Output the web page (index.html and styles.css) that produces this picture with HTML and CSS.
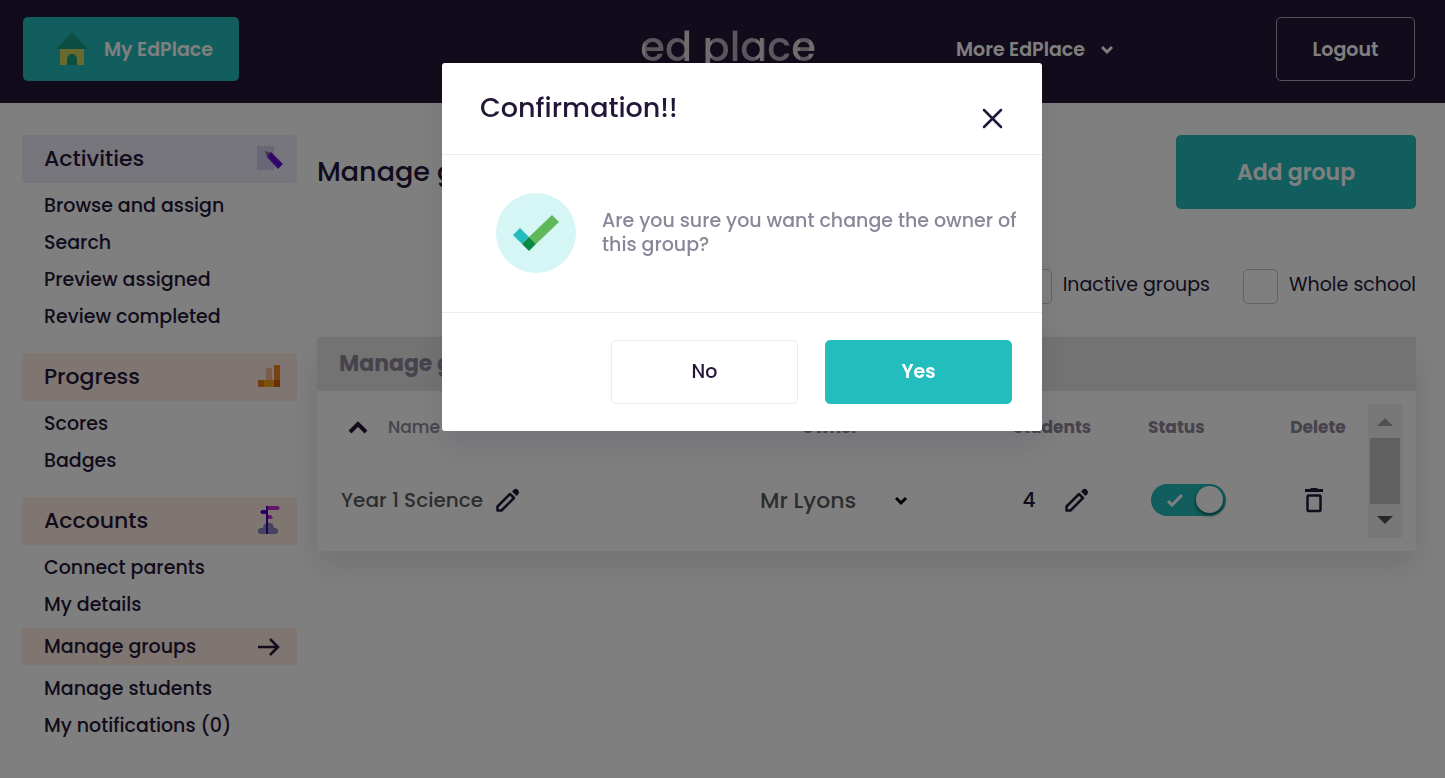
FILE: index.html
```
<!DOCTYPE html>
<html lang="en">

<head>
    <meta charset="UTF-8" />
    <meta name="viewport" content="width=device-width, initial-scale=1.0" />
    <title>EdPlace - Manage groups</title>
    <link rel="stylesheet" href="styles.css">
</head>

<body>
    <header class="navbar">
        <div class="nav-left">
            <a class="home-button" href="#">
                <svg width="32" height="34" viewBox="0 0 32 34">
                    <path d="M16 0L32 17H0z" fill="#189e85" />
                    <path d="M4 17h24v16H4z" fill="#d3d65c" />
                    <path d="M11 33V27a5 5 0 0 1 10 0v6z" fill="#189e85" />
                </svg>
                My EdPlace
            </a>
        </div>
        <a class="logo" href="#">ed place</a>
        <div class="nav-right">
            <button class="more-button">
                More EdPlace
                <svg width="12" height="14" viewBox="0 0 12 14">
                    <path d="M1 5l5 5 5-5" fill="none" stroke="#fff" stroke-width="3" />
                </svg>
            </button>
            <button class="logout-button">Logout</button>
        </div>
    </header>

    <div class="page">
        <nav class="sidebar">
            <h2 class="section-title activities">Activities
                <svg width="26" height="26" viewBox="0 0 26 26">
                    <path d="M0 1h17v24H0z" fill="#cfcfee" />
                    <path d="M8 6l7 2-5 4z" fill="#77778f" />
                    <path d="M14 7l12 12-5 5L10 12z" fill="#6a10e0" />
                    <path d="M13 10l10 11" stroke="#41009c" stroke-width="1" />
                </svg>
            </h2>
            <ul class="links">
                <li><a href="#">Browse and assign</a></li>
                <li><a href="#">Search</a></li>
                <li><a href="#">Preview assigned</a></li>
                <li><a href="#">Review completed</a></li>
            </ul>

            <h2 class="section-title">Progress
                <svg class="icon-progress" width="22" height="22" viewBox="0 0 22 22">
                    <path d="M8 3h6v12H8z" fill="#f5b896" />
                    <path d="M16 0h6v15h-6z" fill="#ec8420" />
                    <path d="M0 15h22v7H0z" fill="#f3a521" />
                    <path d="M0 15h6v7H0z" fill="#e87c1c" />
                    <path d="M16 15h6v7h-6z" fill="#df5c00" />
                </svg>
            </h2>
            <ul class="links">
                <li><a href="#">Scores</a></li>
                <li><a href="#">Badges</a></li>
            </ul>

            <h2 class="section-title">Accounts
                <svg class="icon-accounts" width="22" height="28" viewBox="0 0 22 28">
                    <path d="M3 28a3 3 0 0 1 0-6h2a5 5 0 0 1 11 0h1a3 3 0 0 1 0 6z" fill="#8a8ac4" />
                    <path d="M10 0h10l2 2-2 2H10z" fill="#c42ad6" />
                    <path d="M10 9h3l2 3-2 1h-3z" fill="#c42ad6" />
                    <path d="M8 4H4L2 6l2 2h4z" fill="#5600d8" />
                    <path d="M8 0h2v28H8z" fill="#4a00b4" />
                </svg>
            </h2>
            <ul class="links">
                <li><a href="#">Connect parents</a></li>
                <li><a href="#">My details</a></li>
                <li>
                    <a class="active" href="#">Manage groups
                        <svg width="23" height="18" viewBox="0 0 23 18">
                            <path d="M1 9h20M13 1l8 8-8 8" fill="none" stroke="#231738" stroke-width="2.5" />
                        </svg>
                    </a>
                </li>
                <li><a href="#">Manage students</a></li>
                <li><a href="#">My notifications (0)</a></li>
            </ul>
        </nav>

        <main class="content">
            <div class="title-row">
                <h1>Manage groups</h1>
                <button class="add-button">Add group</button>
            </div>

            <div class="filters">
                <label><input type="checkbox" /> Inactive groups</label>
                <label><input type="checkbox" /> Whole school</label>
            </div>

            <section class="card">
                <h3>Manage groups</h3>
                <div class="card-body">
                    <table>
                        <thead>
                            <tr>
                                <th class="col-name">
                                    <div class="cell">
                                        <svg width="20" height="14" viewBox="0 0 20 14">
                                            <path d="M2 12l8-8 8 8" fill="none" stroke="#231738" stroke-width="4" />
                                        </svg>
                                        Name
                                    </div>
                                </th>
                                <th class="col-owner">Owner</th>
                                <th class="col-students">Students</th>
                                <th class="col-status">Status</th>
                                <th class="col-delete">Delete</th>
                            </tr>
                        </thead>
                        <tbody>
                            <tr>
                                <td class="col-name">
                                    <div class="cell">
                                        Year 1 Science
                                        <button class="icon-button" aria-label="Edit name">
                                            <svg width="24" height="24" viewBox="0 0 24 24">
                                                <path d="M1.5 22.5v-4L14 6l4 4L5.5 22.5z" fill="none" stroke="#231738" stroke-width="2.5" stroke-linejoin="round" />
                                                <path d="M16 3.5l2-2q2-1.5 4 .5t.5 4l-2 2z" fill="#231738" />
                                            </svg>
                                        </button>
                                    </div>
                                </td>
                                <td class="col-owner">
                                    <div class="owner">
                                        <select aria-label="Owner">
                                            <option>Mr Lyons</option>
                                        </select>
                                        <svg width="14" height="10" viewBox="0 0 14 10">
                                            <path d="M1 2l5 5 5-5" fill="none" stroke="#000" stroke-width="3" />
                                        </svg>
                                    </div>
                                </td>
                                <td class="col-students">
                                    <div class="cell students">
                                        4
                                        <button class="icon-button" aria-label="Edit students">
                                            <svg width="24" height="24" viewBox="0 0 24 24">
                                                <path d="M1.5 22.5v-4L14 6l4 4L5.5 22.5z" fill="none" stroke="#231738" stroke-width="2.5" stroke-linejoin="round" />
                                                <path d="M16 3.5l2-2q2-1.5 4 .5t.5 4l-2 2z" fill="#231738" />
                                            </svg>
                                        </button>
                                    </div>
                                </td>
                                <td class="col-status">
                                    <label class="switch">
                                        <input type="checkbox" aria-label="Status" checked />
                                        <svg width="16" height="14" viewBox="0 0 16 14">
                                            <path d="M1 8l4 4L15 2" fill="none" stroke="#fff" stroke-width="3" />
                                        </svg>
                                        <span class="knob"></span>
                                    </label>
                                </td>
                                <td class="col-delete">
                                    <button class="trash" aria-label="Delete">
                                        <svg width="18" height="25" viewBox="0 0 18 25">
                                            <path d="M0 1h5l1-1h6l1 1h5v3H0z" fill="#231738" />
                                            <rect x="2.5" y="7.5" width="13" height="15.5" rx="1" fill="none" stroke="#231738" stroke-width="2.5" />
                                        </svg>
                                    </button>
                                </td>
                            </tr>
                        </tbody>
                    </table>
                    <div class="scrollbar" aria-hidden="true">
                        <span class="arrow-up"></span>
                        <span class="thumb"></span>
                        <span class="arrow-down"></span>
                    </div>
                </div>
            </section>
        </main>
    </div>

    <div class="overlay">
        <div class="modal" role="dialog" aria-labelledby="modal-title">
            <div class="modal-header">
                <h2 id="modal-title">Confirmation!!</h2>
                <button class="close-button" aria-label="Close">
                    <svg width="22" height="22" viewBox="0 0 22 22">
                        <path d="M3 3l17 17M20 3L3 20" fill="none" stroke="#231738" stroke-width="2.5" stroke-linecap="round" />
                    </svg>
                </button>
            </div>
            <div class="modal-body">
                <svg width="80" height="80" viewBox="0 0 80 80">
                    <circle cx="40" cy="40" r="40" fill="#d6f5f5" />
                    <path d="M56 22l7 7-23 22-7-7z" fill="#5fb85a" />
                    <path d="M24 35l9 9-7 7-9-9z" fill="#24bdbe" />
                    <path d="M33 44l7 7-7 7-7-7z" fill="#068a43" />
                </svg>
                <p>Are you sure you want change the owner of this group?</p>
            </div>
            <div class="modal-footer">
                <button class="no-button">No</button>
                <button class="yes-button">Yes</button>
            </div>
        </div>
    </div>
</body>

</html>
```
FILE: styles.css
```
* {
    box-sizing: border-box;
}

body {
    font-family: Poppins, Inter, sans-serif;
    font-size: 19px;
    font-weight: 500;
    color: #231738;
    background-color: #ffffff;
    margin: 0;
}

h1, h2, h3, p, ul {
    margin: 0;
    padding: 0;
}

a {
    color: inherit;
    text-decoration: none;
}

button, select, input {
    font: inherit;
    color: inherit;
    margin: 0;
}

button {
    border: none;
    background: none;
    border-radius: 5px;
    padding: 0;
    cursor: pointer;
}

svg {
    display: block;
    flex-shrink: 0;
}

/* top bar */
.navbar {
    display: grid;
    grid-template-columns: 1fr 194px 1fr;
    align-items: start;
    background-color: #241636;
    color: #ffffff;
    font-weight: 600;
    padding: 17px 30px 22px 23px;
}

.home-button {
    display: flex;
    align-items: center;
    gap: 16px;
    width: 216px;
    height: 64px;
    padding-left: 33px;
    border-radius: 5px;
    background-color: #24bdbe;
}

.logo {
    justify-self: end;
    font-size: 40px;
    line-height: 60px;
    font-weight: 500;
    white-space: nowrap;
    color: transparent;
    background: linear-gradient(90deg, #dddddd 3%, #b2aeb8 3%, #b2aeb8 25%, #dddddd 25%, #dddddd 28%, #b2aeb8 28%, #b2aeb8 37%, #dddddd 37%, #dddddd 41%, #b2aeb8 41%, #b2aeb8 66%, #dddddd 66%, #dddddd 70%, #b2aeb8 70%, #b2aeb8 87%, #dddddd 87%, #dddddd 91%, #b2aeb8 91%, #b2aeb8 96%, #dddddd 96%);
    background-clip: text;
    -webkit-background-clip: text;
}

.nav-right {
    display: flex;
    justify-content: space-between;
    padding-left: 140px;
}

.more-button {
    display: flex;
    align-items: center;
    gap: 16px;
    height: 64px;
}

.logout-button {
    width: 139px;
    height: 64px;
    border: 1px solid #aaa6b2;
}

/* layout */
.page {
    display: flex;
    align-items: flex-start;
    gap: 20px;
    padding: 32px 29px 0 22px;
}

.sidebar {
    width: 275px;
    flex-shrink: 0;
}

.section-title {
    display: flex;
    align-items: center;
    justify-content: space-between;
    height: 48px;
    padding: 0 14px 2px 22px;
    border-radius: 3px;
    background-color: #ffebe3;
    font-size: 22px;
    font-weight: 500;
}

.section-title.activities {
    background-color: #efecfa;
}

.icon-progress,
.icon-accounts {
    margin-right: 3px;
}

.links {
    list-style: none;
    padding: 4px 0 18px;
}

.links a {
    display: flex;
    align-items: center;
    justify-content: space-between;
    height: 37px;
    padding: 0 17px 0 22px;
}

.links .active {
    margin: 5px 0;
    border-radius: 3px;
    background-color: #ffebe3;
}

.content {
    flex: 1;
    min-width: 0;
}

.title-row {
    display: flex;
    align-items: center;
    justify-content: space-between;
}

h1 {
    font-size: 27px;
    font-weight: 500;
}

.add-button {
    width: 240px;
    height: 74px;
    background-color: #24bdbe;
    color: #ffffff;
    font-size: 22px;
    font-weight: 600;
}

.filters {
    display: flex;
    justify-content: flex-end;
    gap: 33px;
    margin: 60px 0 33px;
    line-height: 32px;
    font-weight: 400;
}

.filters label {
    display: flex;
    gap: 11px;
}

.filters input {
    appearance: none;
    width: 35px;
    height: 35px;
    border: 1px solid #c8c8c8;
    border-radius: 5px;
}

/* groups table */
.card {
    box-shadow: 0 16px 30px rgba(35, 23, 56, 0.12);
}

.card h3 {
    height: 54px;
    padding: 0 22px;
    line-height: 54px;
    background-color: #e6e6e6;
    color: #8c8699;
    font-size: 22px;
    font-weight: 700;
}

.card-body {
    display: flex;
    padding: 13px 14px 13px 0;
}

table {
    width: 100%;
    table-layout: fixed;
    border-collapse: collapse;
}

th, td {
    padding: 0;
    text-align: center;
}

th {
    height: 46px;
    color: #8c8699;
    font-size: 17px;
    font-weight: 700;
}

td {
    height: 88px;
    padding-top: 12px;
    color: #5a5a5a;
    font-size: 20px;
}

.cell {
    display: flex;
    align-items: center;
}

.col-name .cell {
    padding-left: 24px;
    gap: 13px;
}

th.col-name .cell {
    padding-left: 31px;
    gap: 20px;
    font-weight: 500;
}

.col-owner {
    width: 296px;
}

.col-students {
    width: 148px;
}

.col-status {
    width: 142px;
    padding-left: 22px;
    text-align: left;
}

.col-delete {
    width: 100px;
}

.owner {
    position: relative;
    width: 149px;
    margin-left: 78px;
}

.owner select {
    appearance: none;
    display: block;
    width: 100%;
    padding: 0;
    border: none;
    background: none;
    font-size: 22px;
}

.owner svg {
    position: absolute;
    top: 11px;
    right: 0;
    pointer-events: none;
}

.students {
    justify-content: center;
    gap: 30px;
    padding-left: 8px;
    color: #231738;
}

.trash {
    display: block;
    margin: 0 auto;
}

td.col-delete {
    padding-right: 8px;
}

.switch {
    position: relative;
    display: block;
    width: 75px;
    height: 32px;
    margin-left: 3px;
}

.switch input {
    appearance: none;
    display: block;
    width: 75px;
    height: 32px;
    border-radius: 16px;
    background-color: #24bdbe;
}

.switch svg {
    position: absolute;
    top: 9px;
    left: 16px;
}

.knob {
    position: absolute;
    top: 2px;
    right: 3px;
    width: 27px;
    height: 27px;
    border-radius: 50%;
    background-color: #ffffff;
    box-shadow: 0 2px 4px rgba(0, 0, 0, 0.6);
}

.scrollbar {
    display: flex;
    flex-direction: column;
    align-items: center;
    justify-content: space-between;
    width: 34px;
    flex-shrink: 0;
    padding: 14px 2px;
    background-color: #f1f1f1;
}

.arrow-up,
.arrow-down {
    border: 8px solid transparent;
    border-top-width: 0;
    border-bottom: 8px solid #a3a3a3;
}

.arrow-down {
    border-top: 8px solid #505050;
    border-bottom-width: 0;
}

.thumb {
    width: 30px;
    height: 66px;
    background-color: #c1c1c1;
}

/* confirmation dialog */
.overlay {
    position: fixed;
    inset: 0;
    display: flex;
    align-items: flex-start;
    justify-content: center;
    padding: 63px 0 0 39px;
    background-color: rgba(0, 0, 0, 0.5);
}

.modal {
    width: 600px;
    border-radius: 3px;
    background-color: #ffffff;
    box-shadow: 0 16px 30px rgba(35, 42, 73, 0.12);
}

.modal-header {
    display: flex;
    justify-content: space-between;
    height: 92px;
    padding: 28px 39px 0 38px;
    border-bottom: 1px solid #ececec;
}

.modal-header h2 {
    font-size: 27px;
    line-height: 34px;
    font-weight: 500;
}

.close-button {
    height: 22px;
    margin-top: 16px;
}

.modal-body {
    display: flex;
    align-items: center;
    gap: 26px;
    height: 158px;
    padding: 0 20px 2px 54px;
    border-bottom: 1px solid #ececec;
    color: #8c8699;
    line-height: 24px;
}

.modal-footer {
    display: flex;
    justify-content: flex-end;
    gap: 27px;
    padding: 27px 30px;
}

.no-button,
.yes-button {
    width: 187px;
    height: 64px;
    padding-bottom: 1px;
    border: 1px solid #ececec;
}

.yes-button {
    border-color: #24bdbe;
    background-color: #24bdbe;
    color: #ffffff;
    font-weight: 600;
}
```
